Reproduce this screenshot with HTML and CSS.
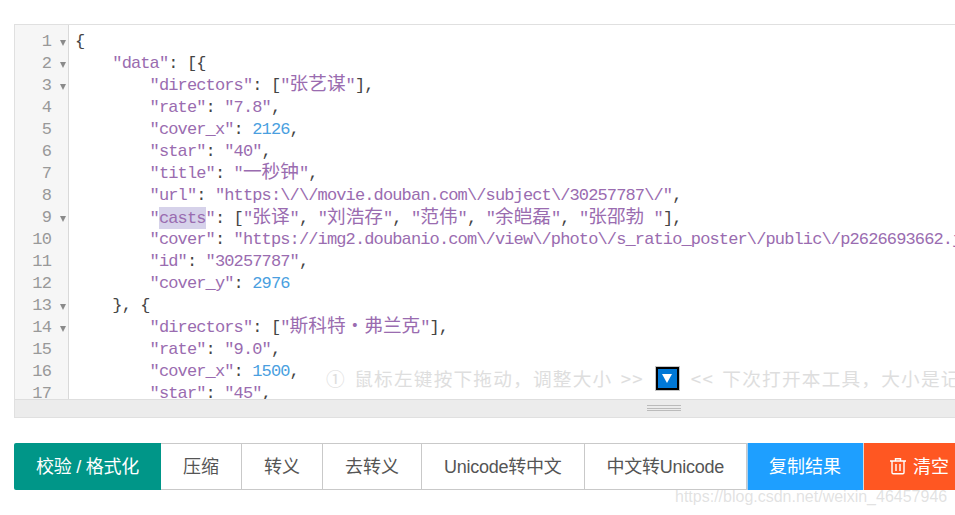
FILE: index.html
```html
<!DOCTYPE html>
<html lang="zh">
<head>
<meta charset="utf-8">
<title>JSON</title>
<link rel="stylesheet" href="styles.css">
</head>
<body>
<main class="page">
  <section class="editor">
    <div class="panes">
      <div class="gutter">
        <div class="num open">1</div><div class="num open">2</div><div class="num open">3</div><div class="num">4</div><div class="num">5</div><div class="num">6</div><div class="num">7</div><div class="num">8</div><div class="num open">9</div><div class="num">10</div><div class="num">11</div><div class="num">12</div><div class="num open">13</div><div class="num open">14</div><div class="num">15</div><div class="num">16</div><div class="num">17</div><div class="num">18</div>
      </div>
      <div class="code">
        <div class="ln">{</div>
        <div class="ln i1"><span class="s">"data"</span>: [{</div>
        <div class="ln i2"><span class="s">"directors"</span>: [<span class="s">"<span class="z">张艺谋</span>"</span>],</div>
        <div class="ln i2"><span class="s">"rate"</span>: <span class="s">"7.8"</span>,</div>
        <div class="ln i2"><span class="s">"cover_x"</span>: <span class="n">2126</span>,</div>
        <div class="ln i2"><span class="s">"star"</span>: <span class="s">"40"</span>,</div>
        <div class="ln i2"><span class="s">"title"</span>: <span class="s">"<span class="z">一秒钟</span>"</span>,</div>
        <div class="ln i2"><span class="s">"url"</span>: <span class="s">"https:\/\/movie.douban.com\/subject\/30257787\/"</span>,</div>
        <div class="ln i2"><span class="s">"<span class="hl">casts</span>"</span>: [<span class="s">"<span class="z">张译</span>"</span>, <span class="s">"<span class="z">刘浩存</span>"</span>, <span class="s">"<span class="z">范伟</span>"</span>, <span class="s">"<span class="z">余皑磊</span>"</span>, <span class="s">"<span class="z">张邵勃</span> "</span>],</div>
        <div class="ln i2"><span class="s">"cover"</span>: <span class="s">"https://img2.doubanio.com\/view\/photo\/s_ratio_poster\/public\/p2626693662.jpg"</span>,</div>
        <div class="ln i2"><span class="s">"id"</span>: <span class="s">"30257787"</span>,</div>
        <div class="ln i2"><span class="s">"cover_y"</span>: <span class="n">2976</span></div>
        <div class="ln i1">}, {</div>
        <div class="ln i2"><span class="s">"directors"</span>: [<span class="s">"<span class="z">斯科特・弗兰克</span>"</span>],</div>
        <div class="ln i2"><span class="s">"rate"</span>: <span class="s">"9.0"</span>,</div>
        <div class="ln i2"><span class="s">"cover_x"</span>: <span class="n">1500</span>,</div>
        <div class="ln i2"><span class="s">"star"</span>: <span class="s">"45"</span>,</div>
        <div class="ln i2"><span class="s">"title"</span>: <span class="s">"<span class="z">后翼弃兵</span>"</span>,</div>
      </div>
    </div>
    <div class="resizer"><span class="grip"></span></div>
    <p class="hint"><span>① 鼠标左键按下拖动&#65292;调整大小 &gt;&gt;</span><span class="hint-key"><span class="hint-arrow"></span></span><span>&lt;&lt; 下次打开本工具&#65292;大小是记住的</span></p>
  </section>

  <nav class="toolbar">
    <button class="btn primary tight">校验 / 格式化</button>
    <button class="btn">压缩</button>
    <button class="btn">转义</button>
    <button class="btn">去转义</button>
    <button class="btn tight">Unicode转中文</button>
    <button class="btn tight">中文转Unicode</button>
    <button class="btn copy">复制结果</button>
    <button class="btn clear"><svg class="trash" viewBox="0 0 18 18" width="18" height="18" aria-hidden="true"><path d="M1 4h16M6.5 4V1.8h5V4M3 4v11.5c0 .8.5 1.3 1.3 1.3h9.4c.8 0 1.3-.5 1.3-1.3V4M7 7v7M11 7v7" fill="none" stroke="currentColor" stroke-width="1.4"/></svg>清空</button>
  </nav>
  <span class="watermark">https://blog.csdn.net/weixin_46457946</span>
</main>
</body>
</html>
```
FILE: styles.css
```css
html, body {
  margin: 0;
  height: 515px;
  overflow: hidden;
  background: #fff;
}
.page {
  position: relative;
  width: 1100px;
  height: 515px;
  padding: 24px 0 0 14px;
  box-sizing: border-box;
}
.editor {
  position: relative;
  width: 1000px;
  height: 394px;
  box-sizing: border-box;
  border: 1px solid #e0e0e0;
  display: flex;
  flex-direction: column;
}
.panes {
  flex: 1;
  display: flex;
  min-height: 0;
  overflow: hidden;
}
.gutter {
  width: 53px;
  flex: none;
  padding-top: 6px;
  background: #f6f6f6;
  border-right: 1px solid #d9d9d9;
  color: #999;
  font: 17px/22px "Liberation Mono", monospace;
  letter-spacing: -0.87px;
}
.num {
  position: relative;
  height: 22px;
  padding-right: 17px;
  text-align: right;
}
.num.open::after {
  content: "";
  position: absolute;
  right: 2px;
  top: 9px;
  border-left: 3.5px solid transparent;
  border-right: 3.5px solid transparent;
  border-top: 6px solid #8a8a8a;
}
.code {
  flex: 1;
  padding: 6px 0 0 6px;
  color: #444;
  font: 17px/22px "Liberation Mono", monospace;
  letter-spacing: -0.87px;
}
.ln {
  height: 22px;
  white-space: pre;
}
.i1 { padding-left: 37.3px; }
.i2 { padding-left: 74.6px; }
.s { color: #9a6cb0; }
.n { color: #4a9fdf; }
.z {
  font-family: "Noto Sans CJK SC", sans-serif;
  font-size: 18.67px;
  letter-spacing: 0;
  line-height: 0;
}
.hl {
  background: #d6d2ea;
  display: inline-block;
  height: 22px;
  line-height: 24px;
}
.resizer {
  flex: none;
  height: 18px;
  box-sizing: border-box;
  background: #ececec;
  border-top: 1px solid #dedede;
  padding: 5px 0 0 632px;
}
.grip {
  display: block;
  width: 34px;
  height: 4px;
  border-top: 1px solid #bbb;
  border-bottom: 1px solid #bbb;
  background: linear-gradient(#bbb, #bbb) 0 2px / 100% 1px no-repeat;
}
.hint {
  position: absolute;
  left: 311px;
  top: 341px;
  margin: 0;
  display: flex;
  align-items: center;
  white-space: pre;
  color: #dedede;
  font: 18.67px/24px "Noto Sans CJK SC", sans-serif;
  letter-spacing: 1.2px;
  word-spacing: 3px;
}
.hint-key {
  width: 23px;
  height: 23px;
  margin: 0 12px;
  box-sizing: border-box;
  background: #0078d7;
  border: 2px solid #000;
  outline: 1px solid #c4c4c4;
  display: flex;
  align-items: center;
  justify-content: center;
}
.hint-arrow {
  border-left: 5px solid transparent;
  border-right: 5px solid transparent;
  border-top: 9px solid #fff;
}
.toolbar {
  display: flex;
  margin-top: 25px;
  height: 47px;
}
.btn {
  height: 47px;
  padding: 2px 22px 0;
  margin: 0;
  background: #fff;
  border: 1px solid #c9c9c9;
  border-left-width: 0;
  color: #555;
  font: 18px/45px "Liberation Sans", "Noto Sans CJK SC", sans-serif;
  white-space: nowrap;
  display: flex;
  align-items: center;
}
.tight { letter-spacing: -0.25px; }
.primary {
  background: #009688;
  border: 0;
  border-radius: 2px 0 0 2px;
  color: #fff;
}
.copy {
  background: #1e9fff;
  border: 0;
  border-left: 1px solid #a9cfee;
  color: #fff;
  padding-left: 21px;
}
.clear {
  background: #ff5722;
  border: 0;
  border-left: 1px solid #d8d8d8;
  color: #fff;
  padding-left: 25px;
}
.trash {
  margin: 0 6px 3px 0;
}
.watermark {
  position: absolute;
  left: 675px;
  top: 487px;
  color: rgba(190, 190, 190, 0.45);
  font: 16px/20px "Liberation Sans", sans-serif;
  white-space: nowrap;
}
```
